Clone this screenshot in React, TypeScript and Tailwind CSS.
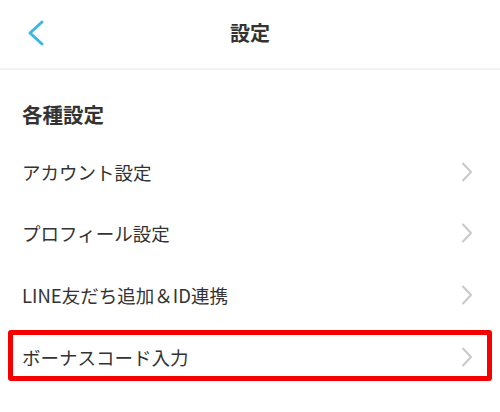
import React from "react";

const Chevron = () => (
  <svg width="12" height="20" viewBox="0 0 12 20" className="shrink-0">
    <polyline points="2,1.5 10,10 2,18.5" fill="none" stroke="#c9c9c9" strokeWidth="2" strokeLinecap="round" strokeLinejoin="round" />
  </svg>
);

const Row = ({ label }: { label: string }) => (
  <div className="flex h-[61.5px] items-center justify-between pl-[22px] pr-[27px]">
    <span className="text-[18.5px] leading-[26px] text-[#333333]">{label}</span>
    <Chevron />
  </div>
);

export default function App() {
  return (
    <div
      className="w-[500px] h-[412px] bg-white overflow-hidden"
      style={{ fontFamily: '"Noto Sans CJK JP", "Noto Sans", sans-serif' }}
    >
      <header className="relative flex h-[70px] items-center justify-center border-b-2 border-[#f3f3f3]">
        <button className="absolute left-[26px] top-[19px] flex h-[28px] w-[20px] items-center justify-center">
          <svg width="18" height="28" viewBox="0 0 18 28">
            <polyline points="15,3 3,14 15,25" fill="none" stroke="#3db6e3" strokeWidth="3" strokeLinecap="round" strokeLinejoin="round" />
          </svg>
        </button>
        <h1 className="text-[20px] font-bold leading-[28px] text-[#333333] -mt-[2px]">設定</h1>
      </header>
      <div className="pl-[22px] pt-[30px] pb-[13px]">
        <h2 className="text-[20.5px] font-bold leading-[28px] text-[#333333]">各種設定</h2>
      </div>
      <Row label="アカウント設定" />
      <Row label="プロフィール設定" />
      <Row label="LINE友だち追加＆ID連携" />
      <div className="mx-[8px] mt-[4px] flex h-[51px] items-center justify-between rounded-[3px] border-[5px] border-[#f50000] pl-[9px] pr-[14px]">
        <span className="mt-[3px] text-[18.5px] leading-[26px] text-[#333333]">ボーナスコード入力</span>
        <span className="mt-[3px] flex"><Chevron /></span>
      </div>
    </div>
  );
}
